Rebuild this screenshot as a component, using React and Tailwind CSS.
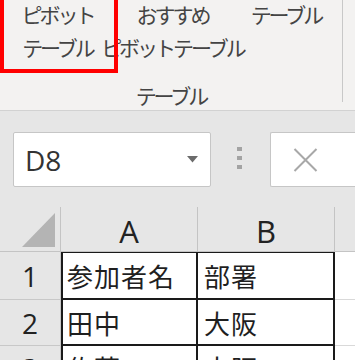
import React from 'react';

const jp = { fontFamily: '"Noto Sans CJK JP", "Noto Sans", sans-serif' };
const latin = { fontFamily: '"Open Sans", "Liberation Sans", sans-serif' };

const RibbonButton = ({ lines, width }) => (
    <div
        className={`${width} flex flex-col items-center text-[21px] leading-[33px] tracking-[-3px] text-[#444] whitespace-nowrap -mt-[2px]`}
        style={jp}
    >
        {lines.map((line) => (
            <span key={line}>{line}</span>
        ))}
    </div>
);

const rows = [
    { n: '1', a: '参加者名', b: '部署', h: 'h-[48px]' },
    { n: '2', a: '田中', b: '大阪', h: 'h-[46px]' },
    { n: '3', a: '佐藤', b: '大阪', h: 'h-[44px]' },
];

export default function App() {
    return (
        <div className="w-[355px] h-[360px] overflow-hidden bg-[#e6e6e6]">
            {/* ribbon */}
            <div className="relative h-[111px] bg-[#f3f2f1] border-b border-[#d2d2d2]">
                <div className="flex h-full">
                    <div className="flex flex-col w-[342px]">
                        <div className="flex h-[83px]">
                            <RibbonButton lines={['ピボット', 'テーブル']} width="w-[115px]" />
                            <RibbonButton lines={['おすすめ', 'ピボットテーブル']} width="w-[115px]" />
                            <RibbonButton lines={['テーブル']} width="w-[112px]" />
                        </div>
                        <div
                            className="text-center text-[21px] leading-[24px] tracking-[-3px] text-[#444]"
                            style={jp}
                        >
                            テーブル
                        </div>
                    </div>
                    <div className="w-px h-[102px] bg-[#c8c8c8]"></div>
                </div>
                <div className="absolute left-0 top-[-5px] w-[118px] h-[78px] border-4 border-[#ff0000]"></div>
            </div>

            {/* formula bar */}
            <div className="h-[96px] pt-[21px] flex items-start">
                <div className="ml-[13px] w-[198px] h-[55px] bg-white border border-[#c6c6c6] rounded-[2px] flex items-center justify-between pl-[11px] pr-[12px]">
                    <span className="text-[28px] text-[#333] leading-none" style={latin}>
                        D8
                    </span>
                    <svg width="11" height="7" viewBox="0 0 11 7">
                        <path d="M0 0 L11 0 L5.5 6.5 Z" fill="#6b6b6b" />
                    </svg>
                </div>
                <div className="ml-[26px] mt-[15px] flex flex-col gap-[5px]">
                    <div className="w-[5px] h-[4px] bg-[#a3a3a3]"></div>
                    <div className="w-[5px] h-[4px] bg-[#a3a3a3]"></div>
                    <div className="w-[5px] h-[4px] bg-[#a3a3a3]"></div>
                </div>
                <div className="ml-[28px] flex-1 h-[55px] bg-white border border-[#c6c6c6] border-r-0 rounded-l-[2px] flex items-center pl-[22px]">
                    <svg width="25" height="24" viewBox="0 0 25 24">
                        <path d="M1.5 1 L23.5 23 M23.5 1 L1.5 23" stroke="#a8a8a8" strokeWidth="2" fill="none" />
                    </svg>
                </div>
            </div>

            {/* column headers */}
            <div className="flex h-[45px] border-b border-[#c4c4c4] text-[#222]" style={latin}>
                <div className="w-[61px] border-r border-[#c4c4c4] flex items-end justify-end pr-[5px] pb-[4px]">
                    <svg width="33" height="34" viewBox="0 0 33 34">
                        <path d="M33 0 L33 34 L0 34 Z" fill="#b4b4b4" />
                    </svg>
                </div>
                <div className="w-[137px] border-r border-[#c4c4c4] flex items-center justify-center text-[31px] leading-none pt-[4px]">
                    A
                </div>
                <div className="w-[137px] border-r border-[#c4c4c4] flex items-center justify-center text-[31px] leading-none pt-[4px]">
                    B
                </div>
                <div className="flex-1"></div>
            </div>

            {/* rows */}
            {rows.map((row, i) => (
                <div key={row.n} className={`flex ${row.h}`}>
                    <div
                        className="w-[61px] border-r border-b border-[#c8c8c8] flex items-center justify-center text-[28px] text-[#222] leading-none"
                        style={latin}
                    >
                        {row.n}
                    </div>
                    <div
                        className={`w-[137px] bg-white border-l-2 border-r-2 border-b-2 border-[#1a1a1a] ${i === 0 ? 'border-t' : ''} flex items-center pl-[4px] text-[26px] tracking-[1px] text-[#1f1f1f] whitespace-nowrap`}
                        style={jp}
                    >
                        {row.a}
                    </div>
                    <div
                        className={`w-[137px] bg-white border-r-2 border-b-2 border-[#1a1a1a] ${i === 0 ? 'border-t' : ''} flex items-center pl-[6px] text-[26px] tracking-[1px] text-[#1f1f1f] whitespace-nowrap`}
                        style={jp}
                    >
                        {row.b}
                    </div>
                    <div className="flex-1 bg-white border-b border-[#d9d9d9]"></div>
                </div>
            ))}
        </div>
    );
}
